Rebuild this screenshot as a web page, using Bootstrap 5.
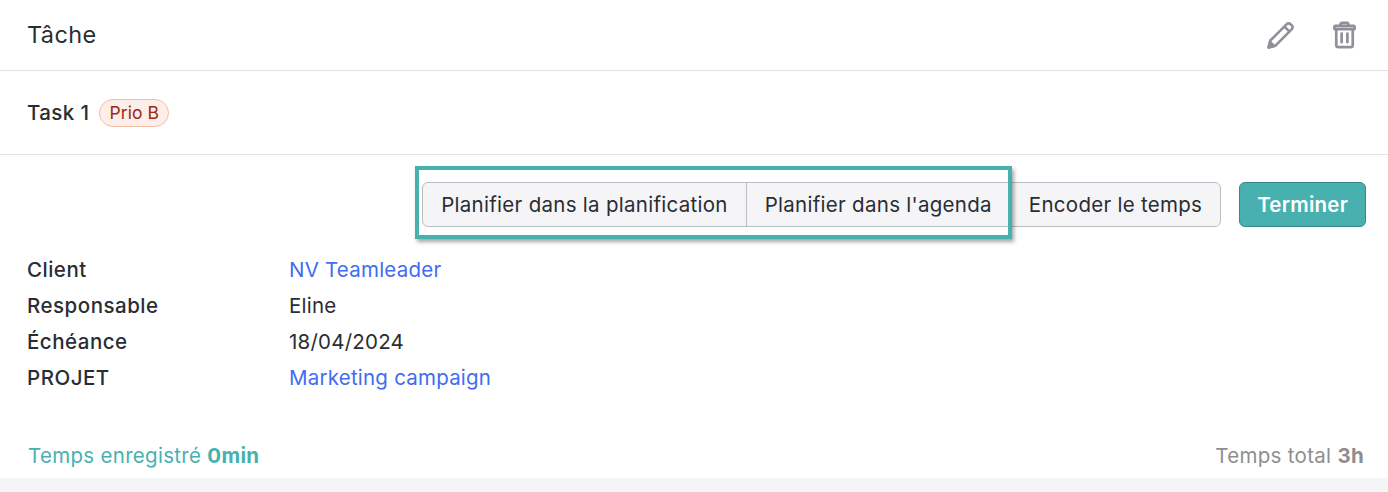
<!DOCTYPE html>
<html lang="fr">
<head>
<meta charset="utf-8">
<title>Tâche</title>
<link href="https://cdn.jsdelivr.net/npm/bootstrap@5.3.0/dist/css/bootstrap.min.css" rel="stylesheet">
<style>
html,body{height:492px;overflow:hidden}
body{font-family:"Inter",sans-serif;font-size:20.5px;letter-spacing:.22px;color:#2a2d33;background:#f5f5f8}
.sheet{background:#fff;height:478px;display:flex;flex-direction:column}
.head-bar{height:71px;padding:0 28px 0 27px;border-bottom:1px solid #e3e3e3}
.head-title{font-size:23.5px;letter-spacing:.4px;color:#2a2d33}
.tool-row{gap:31px}
.tool-btn{width:32px;height:32px;padding:0;background:none;border:0;color:#8f9098;display:flex;align-items:center;justify-content:center}
.task-bar{height:84px;padding:0 27px;border-bottom:1px solid #e3e3e3;gap:10px}
.task-name{font-weight:500;letter-spacing:.4px;margin-top:2px}
.prio-tag{font-size:17.5px;letter-spacing:.1px;line-height:26px;height:28px;padding:0 9px;border:1px solid #f6bda5;background:#fdeeea;color:#9c2a0e;border-radius:14px}
.act-bar{padding:27px 22px 0 0;gap:18px}
.act-group{position:relative}
.act-btn{font-size:20.5px;letter-spacing:.28px;height:45px;padding:2px 18px 0;background:#f5f5f8;border:1px solid #bdbdc1;color:#2a2d33;border-radius:6px}
.act-btn:hover{background:#ededf1;border-color:#bdbdc1;color:#2a2d33}
.done-btn{font-size:20.5px;letter-spacing:.22px;font-weight:600;height:45px;padding:2px 17px 0;background:#48b1b0;border:1px solid #35898a;color:#fff;border-radius:6px}
.done-btn:hover{background:#48b1b0;border-color:#35898a;color:#fff}
.hilite{position:absolute;left:-7px;top:-16px;width:597px;height:73px;border:4px solid #48b1b0;box-shadow:2px 3px 4px rgba(0,0,0,.35);pointer-events:none}
.detail-list{padding:25px 27px 0;margin:0}
.detail-row{display:flex;height:36px;align-items:center}
.detail-key{width:262px;font-weight:550;letter-spacing:.5px;margin:0}
.detail-val{margin:0}
.detail-val a{color:#3f6cf0;text-decoration:none}
.foot-bar{padding:0 24px 0 28px;margin-top:auto;height:44px;letter-spacing:.3px}
.logged{color:#48b1b0}
.total{color:#8e8e8e}
</style>
</head>
<body>
<div class="sheet">
  <div class="head-bar d-flex align-items-center justify-content-between">
    <div class="head-title">Tâche</div>
    <div class="tool-row d-flex align-items-center">
      <button class="tool-btn" type="button" aria-label="Modifier">
        <svg width="30" height="30" viewBox="0 0 30 30" fill="none" stroke="currentColor" stroke-width="2.6" stroke-linejoin="round"><path d="M2.5 27.5l1.8-7L20.5 4.3c1.3-1.300 3-1.300 4.200 0l.9.9c1.200 1.200 1.200 2.900 0 4.200L9.500 25.700z"/><path d="M18.300 6.500l5.200 5.200"/><path d="M2.500 27.500l1.500-5.500 4 4z" fill="currentColor"/></svg>
      </button>
      <button class="tool-btn" type="button" aria-label="Supprimer">
        <svg width="23" height="28" viewBox="0 0 24 29" fill="none" stroke="currentColor" stroke-width="2.800" stroke-linejoin="round" stroke-linecap="round"><path d="M8 4.500V3.400c0-.9.600-1.500 1.500-1.500h5c.9 0 1.500.6 1.500 1.500v1.100"/><path d="M2.500 5h19c.6 0 1 .4 1 1v2.300h-21V6c0-.6.400-1 1-1z"/><path d="M3.400 8.500v16.400c0 1.500.8 2.300 2.300 2.300h12.600c1.500 0 2.300-.8 2.300-2.300V8.500"/><path d="M9 13v9M15 13v9"/></svg>
      </button>
    </div>
  </div>
  <div class="task-bar d-flex align-items-center">
    <span class="task-name">Task 1</span>
    <span class="prio-tag">Prio B</span>
  </div>
  <div class="act-bar d-flex justify-content-end align-items-start">
    <div class="act-group">
      <div class="btn-group" role="group">
        <button class="btn act-btn" type="button">Planifier dans la planification</button>
        <button class="btn act-btn" type="button">Planifier dans l'agenda</button>
        <button class="btn act-btn" type="button">Encoder le temps</button>
      </div>
      <div class="hilite"></div>
    </div>
    <button class="btn done-btn" type="button">Terminer</button>
  </div>
  <dl class="detail-list">
    <div class="detail-row"><dt class="detail-key">Client</dt><dd class="detail-val"><a href="#">NV Teamleader</a></dd></div>
    <div class="detail-row"><dt class="detail-key">Responsable</dt><dd class="detail-val">Eline</dd></div>
    <div class="detail-row"><dt class="detail-key">Échéance</dt><dd class="detail-val">18/04/2024</dd></div>
    <div class="detail-row"><dt class="detail-key">PROJET</dt><dd class="detail-val"><a href="#">Marketing campaign</a></dd></div>
  </dl>
  <div class="foot-bar d-flex justify-content-between align-items-center">
    <span class="logged">Temps enregistré <strong class="fw-bold">0min</strong></span>
    <span class="total">Temps total <strong class="fw-bold">3h</strong></span>
  </div>
</div>
<script src="https://cdn.jsdelivr.net/npm/bootstrap@5.3.0/dist/js/bootstrap.bundle.min.js"></script>
</body>
</html>
